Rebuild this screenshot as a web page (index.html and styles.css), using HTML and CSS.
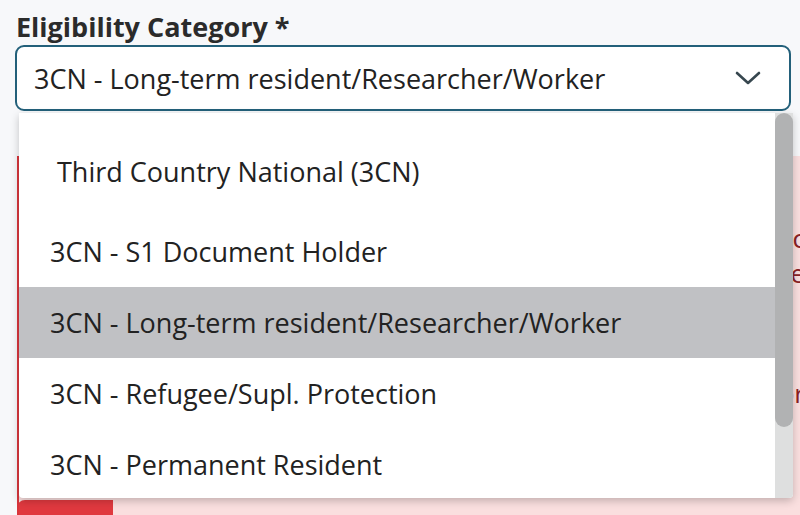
FILE: index.html
```html
<!DOCTYPE html>
<html>
<head>
<meta charset="utf-8">
<link rel="stylesheet" href="styles.css">
</head>
<body>
<div class="field">
  <label class="label">Eligibility Category *</label>
  <div class="select">
    <span class="select-value">3CN - Long-term resident/Researcher/Worker</span>
    <svg class="chevron" width="26" height="16" viewBox="0 0 26 16"><path d="M2 3 L13 13 L24 3" fill="none" stroke="#37474f" stroke-width="2.6" stroke-linecap="round" stroke-linejoin="round"/></svg>
  </div>
  <div class="alert">
    <p class="alert-text">Please check this category before you c</p>
    <p class="alert-text">A valid residence permit is require</p>
    <p class="alert-text alert-text-last">Supporting documents must be provided for</p>
    <div class="alert-button"></div>
  </div>
  <div class="dropdown">
    <ul class="options">
      <li class="group">Third Country National (3CN)</li>
      <li class="option">3CN - S1 Document Holder</li>
      <li class="option active">3CN - Long-term resident/Researcher/Worker</li>
      <li class="option">3CN - Refugee/Supl. Protection</li>
      <li class="option">3CN - Permanent Resident</li>
    </ul>
    <div class="scrollbar"><div class="thumb"></div></div>
  </div>
</div>
</body>
</html>
```
FILE: styles.css
```css
html, body {
  margin: 0;
  padding: 0;
  height: 100%;
  overflow: hidden;
}
body {
  background: #f7f8fa;
  font-family: "Open Sans", "Noto Sans", sans-serif;
  color: #222;
}
.field {
  position: relative;
  padding: 9px 9px 0 15px;
}
.label {
  display: block;
  font-weight: 700;
  font-size: 27px;
  line-height: 35px;
  color: #2b2b2b;
  padding-left: 1px;
}
.select {
  margin-top: 1px;
  border: 2.5px solid #23607a;
  border-radius: 9px;
  background: #fff;
  display: flex;
  align-items: center;
  justify-content: space-between;
  padding: 0 28px 0 17px;
  box-sizing: border-box;
  height: 66px;
}
.select-value {
  font-size: 27px;
  color: #222;
}
.chevron {
  display: block;
}
.alert {
  margin-top: 45px;
  margin-left: 2px;
  margin-right: -9px;
  background: #fadfdf;
  border-left: 2px solid #d9363c;
  height: 420px;
  padding: 65px 0 0 20px;
  box-sizing: border-box;
  overflow: hidden;
}
.alert-text {
  margin: 0;
  height: 35px;
  line-height: 35px;
  white-space: nowrap;
  font-size: 26px;
  color: #8a2024;
  text-align: right;
  width: 766px;
  overflow: hidden;
}
.alert-text-last {
  margin-top: 85px;
}
.alert-button {
  width: 96px;
  height: 30px;
  background: #e0393f;
  border-radius: 8px 0 0 0;
  margin-left: -22px;
  margin-top: 89px;
}
.dropdown {
  position: absolute;
  left: 19px;
  top: 113px;
  width: 774px;
  height: 385px;
  background: #fff;
  display: flex;
  box-shadow: 0 3px 8px rgba(0,0,0,0.22);
  border-radius: 0 0 4px 4px;
  overflow: hidden;
}
.options {
  list-style: none;
  margin: 0;
  padding: 25px 0 0;
  flex: 1;
}
.group {
  padding-left: 38px;
  height: 78px;
  line-height: 68px;
  font-size: 27px;
  color: #222;
}
.option {
  padding-left: 31px;
  height: 71px;
  line-height: 71px;
  font-size: 27px;
  color: #222;
}
.option.active {
  background: #c0c1c4;
}
.scrollbar {
  width: 18px;
  background: #dedfdf;
}
.thumb {
  height: 314px;
  background: #b1b2b3;
  border-radius: 9px;
}
```
